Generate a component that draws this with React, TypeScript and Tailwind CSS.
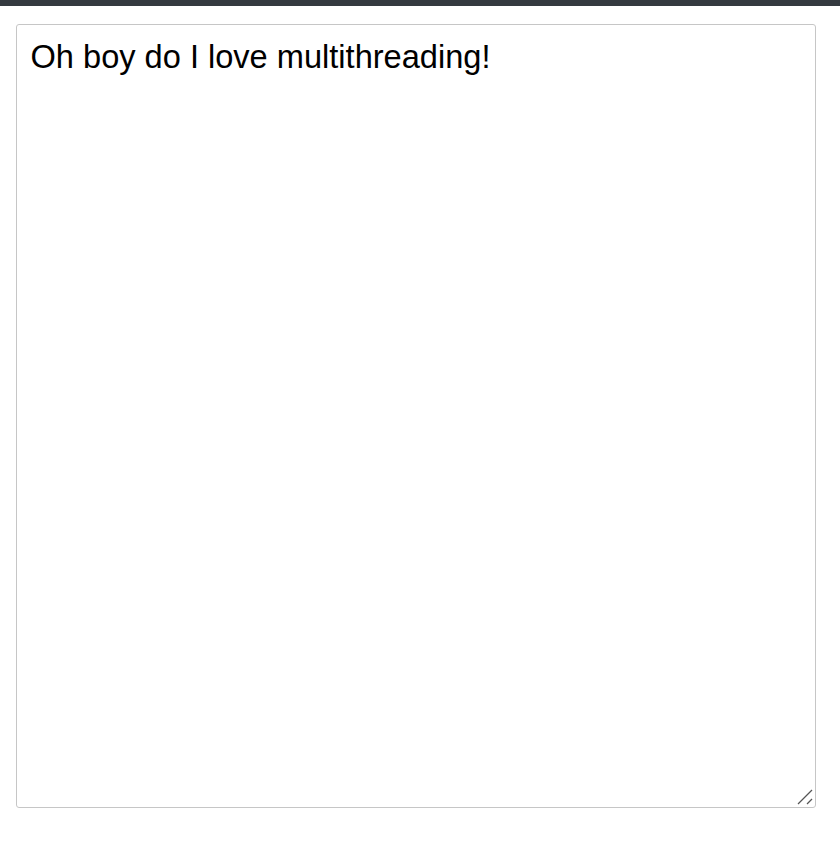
export default function App() {
  return (
    <div className="min-h-screen bg-white">
      <div className="h-[6px] bg-[#343a40]" />
      <div className="px-4 pt-[18px]">
        <div className="relative w-[800px]">
          <textarea
            defaultValue="Oh boy do I love multithreading!"
            className="block h-[784px] w-[800px] resize-none rounded-[3px] border-[1.5px] border-[#c6c6c6] px-[13.5px] py-[12px] text-[32.6px] leading-[1.2] text-black outline-none"
            style={{ fontFamily: '"Liberation Sans", Arial, sans-serif' }}
          />
          {/* resize grip */}
          <svg
            className="pointer-events-none absolute bottom-[3px] right-[3px]"
            width="16"
            height="16"
            viewBox="0 0 16 16"
          >
            <line x1="1" y1="15" x2="15" y2="1" stroke="#555" strokeWidth="1.3" />
            <line x1="10" y1="15" x2="15" y2="10" stroke="#555" strokeWidth="1.3" />
          </svg>
        </div>
      </div>
    </div>
  );
}
